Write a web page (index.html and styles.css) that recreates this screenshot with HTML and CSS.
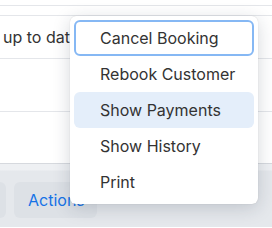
FILE: index.html
```html
<!DOCTYPE html>
<html lang="en">
<head>
<meta charset="UTF-8">
<meta name="viewport" content="width=device-width, initial-scale=1.0">
<title>Booking actions</title>
<link rel="stylesheet" href="styles.css">
</head>
<body>
<div class="page">
    <div class="list">
        <div class="row row-top"></div>
        <div class="row row-head"></div>
        <div class="row row-item"><span class="cell">up to date</span></div>
        <div class="row row-empty"></div>
        <div class="spacer"></div>
    </div>
    <div class="footer">
        <button class="btn btn-prev"></button>
        <button class="btn btn-actions">Actions</button>
    </div>

    <div class="menu">
        <button class="menu-item focused">Cancel Booking</button>
        <button class="menu-item">Rebook Customer</button>
        <button class="menu-item hover">Show Payments</button>
        <button class="menu-item">Show History</button>
        <button class="menu-item">Print</button>
    </div>
</div>
</body>
</html>
```
FILE: styles.css
```css
body {
    margin: 0;
    font-family: Inter, "Liberation Sans", sans-serif;
    font-size: 16px;
    color: #333;
    background-color: #fff;
}
.page {
    position: relative;
    width: 272px;
    height: 228px;
    overflow: hidden;
}
.list {
    background-color: #fff;
}
.row {
    border-bottom: 1px solid #e4e6ea;
}
.row-top {
    height: 5px;
}
.row-head {
    height: 9px;
}
.row-item {
    height: 42px;
    display: flex;
    align-items: center;
}
.cell {
    padding-left: 3px;
    white-space: nowrap;
}
.row-empty {
    height: 52px;
}
.spacer {
    height: 51px;
}
.footer {
    border-top: 1px solid #d6d9de;
    height: 64px;
    background: linear-gradient(#eef0f3 0, #eef0f3 6px, #e5e8ec 7px);
    display: flex;
    align-items: flex-start;
    gap: 8px;
    padding-top: 18px;
    box-sizing: border-box;
}
.btn {
    height: 36px;
    border: none;
    border-radius: 6px;
    background-color: #dde1e6;
    font-family: inherit;
    font-size: 16px;
    cursor: pointer;
}
.btn-prev {
    width: 20px;
    margin-left: -14px;
}
.btn-actions {
    width: 83px;
    color: #1673e6;
    text-align: left;
    padding-left: 14px;
}
.menu {
    position: absolute;
    left: 70px;
    top: 16px;
    width: 188px;
    padding: 4px 4px 4px 4px;
    box-sizing: border-box;
    background-color: #fff;
    border-radius: 6px;
    box-shadow: 0 4px 18px rgba(30, 40, 60, 0.18), 0 0 1px rgba(0, 0, 0, 0.2);
    display: flex;
    flex-direction: column;
}
.menu-item {
    height: 36px;
    border: 2px solid transparent;
    border-radius: 6px;
    background: none;
    font-family: inherit;
    font-size: 16px;
    color: #333;
    text-align: left;
    padding: 0 0 0 24px;
    cursor: pointer;
}
.menu-item.focused {
    border-color: #86b8f4;
}
.menu-item.hover {
    background-color: #e4eefa;
}
```
